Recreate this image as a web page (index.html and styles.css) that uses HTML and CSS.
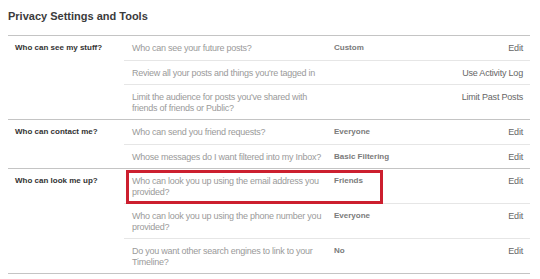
FILE: index.html
```
<!DOCTYPE html>
<html lang="en">
<head>
  <meta charset="UTF-8">
  <title>Privacy Settings and Tools</title>
  <link rel="stylesheet" href="styles.css">
</head>
<body>
  <div class="page">
    <h1>Privacy Settings and Tools</h1>

    <table class="settings">
      <colgroup>
        <col class="col-label">
        <col class="col-question">
        <col class="col-value">
        <col class="col-action">
      </colgroup>

      <!-- Who can see my stuff -->
      <tbody>
        <tr>
          <th rowspan="3">Who can see my stuff?</th>
          <td class="question">Who can see your future posts?</td>
          <td class="value">Custom</td>
          <td class="action">Edit</td>
        </tr>
        <tr>
          <td class="question" colspan="2">Review all your posts and things you're tagged in</td>
          <td class="action">Use Activity Log</td>
        </tr>
        <tr>
          <td class="question">Limit the audience for posts you've shared with friends of friends or Public?</td>
          <td class="value"></td>
          <td class="action">Limit Past Posts</td>
        </tr>
      </tbody>

      <!-- Who can contact me -->
      <tbody>
        <tr>
          <th rowspan="2">Who can contact me?</th>
          <td class="question">Who can send you friend requests?</td>
          <td class="value">Everyone</td>
          <td class="action">Edit</td>
        </tr>
        <tr>
          <td class="question">Whose messages do I want filtered into my Inbox?</td>
          <td class="value">Basic Filtering</td>
          <td class="action">Edit</td>
        </tr>
      </tbody>

      <!-- Who can look me up -->
      <tbody>
        <tr>
          <th rowspan="3">Who can look me up?</th>
          <td class="question marked">
            Who can look you up using the email address you provided?
            <span class="highlight"></span>
          </td>
          <td class="value">Friends</td>
          <td class="action">Edit</td>
        </tr>
        <tr>
          <td class="question">Who can look you up using the phone number you provided?</td>
          <td class="value">Everyone</td>
          <td class="action">Edit</td>
        </tr>
        <tr>
          <td class="question">Do you want other search engines to link to your Timeline?</td>
          <td class="value">No</td>
          <td class="action">Edit</td>
        </tr>
      </tbody>
    </table>
  </div>
</body>
</html>
```

FILE: styles.css
```
* {
  margin: 0;
  padding: 0;
  box-sizing: border-box;
}

body {
  background: #fff;
  font-family: 'Liberation Sans', Arial, sans-serif;
}

.page {
  padding: 10px 10px 0 8px;
}

h1 {
  font-size: 11px;
  font-weight: bold;
  color: #3b3b3b;
  line-height: 13px;
  margin-bottom: 12px;
}

.settings {
  width: 522px;
  table-layout: fixed;
  border-collapse: collapse;
  font-size: 9px;
  line-height: 10.5px;
}

.col-label { width: 116px; }
.col-question { width: 202px; }
.col-value { width: 126px; }
.col-action { width: 78px; }

.settings tbody {
  border-top: 1px solid #c4c4c4;
}

.settings tbody:last-child {
  border-bottom: 1px solid #c4c4c4;
}

.settings th {
  padding: 7px 0 6px 7px;
  text-align: left;
  vertical-align: top;
  font-size: 8px;
  font-weight: bold;
  color: #333;
}

.settings td {
  padding: 7px 0 6px 8px;
  vertical-align: top;
  border-top: 1px solid #e6e6e6;
}

.settings tr:first-child td {
  border-top: none;
}

.question {
  letter-spacing: -0.25px;
  color: #9a9a9a;
}

.value {
  font-size: 8px;
  font-weight: bold;
  color: #7a7a7a;
}

.action {
  padding-right: 7px !important;
  text-align: right;
  letter-spacing: -0.2px;
  color: #666;
}

.marked {
  position: relative;
}

.highlight {
  position: absolute;
  left: 2px;
  top: 1px;
  width: 257px;
  height: 34px;
  border: 3px solid #cc1f2f;
}
```
